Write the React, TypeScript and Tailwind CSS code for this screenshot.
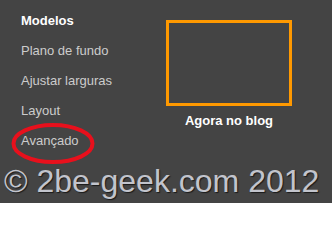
const menu = ["Modelos", "Plano de fundo", "Ajustar larguras", "Layout", "Avançado"];

export default function App() {
  return (
    <div
      className="relative w-[332px] h-[203px] overflow-hidden bg-[#444444]"
      style={{ fontFamily: '"Liberation Sans", Arial, sans-serif' }}
    >
      <div className="flex">
        {/* left menu */}
        <div className="w-[166px] pl-[21px] pt-[6px]">
          {menu.map((item, i) => (
            <div
              key={item}
              className={`h-[30px] flex items-center text-[13px] ${
                i === 0 ? "font-bold text-white" : "text-[#cccccc]"
              }`}
            >
              {item}
            </div>
          ))}
        </div>

        {/* preview */}
        <div className="flex flex-col pt-[20px]">
          <div className="w-[126px] h-[86px] border-[3px] border-[#ff9900]" />
          <div className="w-[126px] text-center text-[13px] font-bold text-white mt-[5px]">
            Agora no blog
          </div>
        </div>
      </div>

      {/* red highlight */}
      <svg className="absolute left-[11px] top-[122px]" width="84" height="43" viewBox="0 0 84 43">
        <ellipse cx="42" cy="21.5" rx="39.5" ry="18.5" fill="none" stroke="#e8101c" strokeWidth="4" />
      </svg>

      {/* watermark */}
      <div
        className="absolute left-[4px] top-[162px] text-[32px] leading-[38px] text-[#c2c4cc] whitespace-nowrap"
        style={{ textShadow: "1px 1px 1px #1a1a1a" }}
      >
        © 2be-geek.com 2012
      </div>
    </div>
  );
}
